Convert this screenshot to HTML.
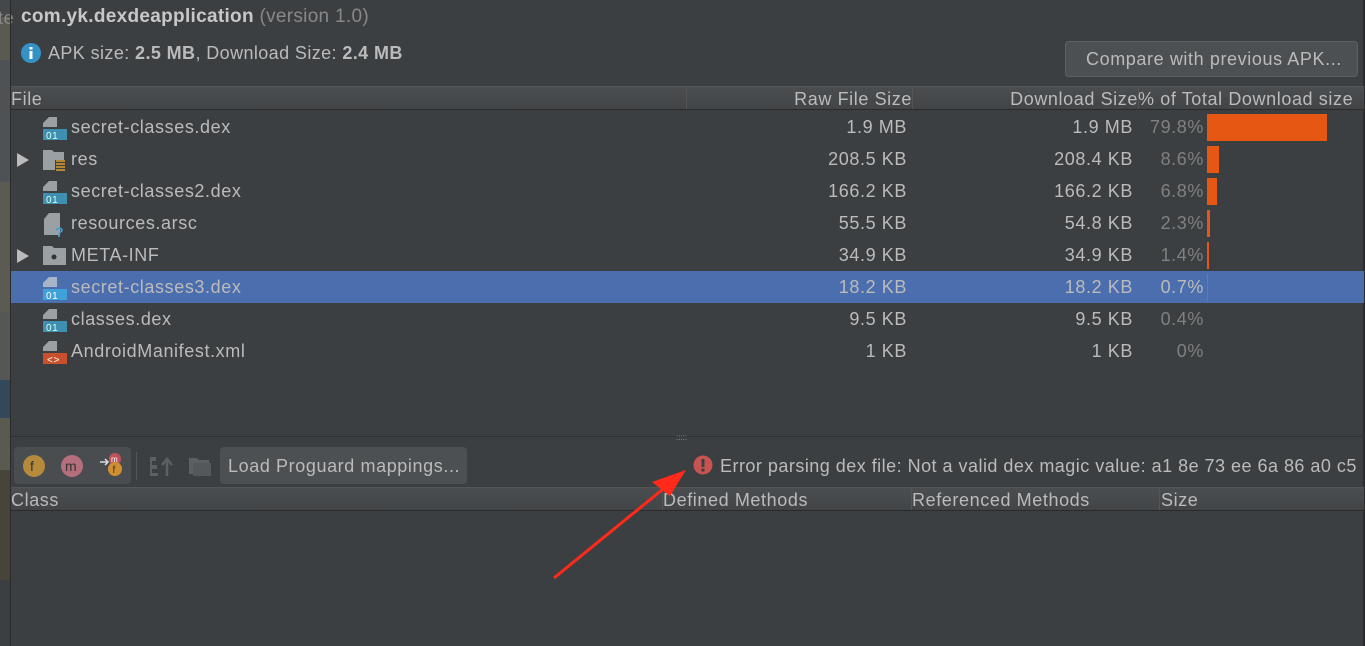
<!DOCTYPE html>
<html><head><meta charset="utf-8"><style>
*{margin:0;padding:0;box-sizing:border-box}
body{width:1365px;height:646px;background:#3c3f41;font-family:"Liberation Sans","Noto Sans CJK SC",sans-serif;color:#bbbbbb;position:relative;overflow:hidden;font-size:18px;letter-spacing:0.6px}
.a{position:absolute;white-space:nowrap}
.strip div{position:absolute;left:0;width:10px}
.hdr{position:absolute;left:11px;width:1353px;height:24px;background:linear-gradient(#4b4e50,#424547);border-top:1px solid #555;border-bottom:1px solid #2b2b2b}
.hdr span{position:absolute;top:2px;font-size:18px;color:#bbb;white-space:nowrap}
.row{position:absolute;left:11px;width:1353px;height:32px}
.row span{position:absolute;top:6px;font-size:18px}
.r{text-align:right}
.pct{color:#808080}
.bar{position:absolute;background:#e55712;left:1196px}
.ic{position:absolute;left:31px;top:4px}
.tri{position:absolute;left:6px;top:10px;width:0;height:0;border-left:12px solid #bbb;border-top:7px solid transparent;border-bottom:7px solid transparent}
.btn{position:absolute;background:#4c5052;border-radius:4px}
</style></head><body>
<div class="strip">
<div style="top:0;height:17px;background:#45484a"></div>
<div style="top:17px;height:43px;background:#5b5a51"></div>
<div style="top:60px;height:122px;background:#4f5254"></div>
<div style="top:182px;height:130px;background:#5c5b53"></div>
<div style="top:312px;height:68px;background:#545755"></div>
<div style="top:380px;height:38px;background:#33495a"></div>
<div style="top:418px;height:52px;background:#5b5a51"></div>
<div style="top:470px;height:110px;background:#47453a"></div>
</div>
<div class="a" style="left:-2px;top:8px;color:#888;font-size:18px">te</div>
<div class="a" style="left:10px;top:0;width:1px;height:646px;background:#2b2b2b"></div>
<div class="a" style="left:1363px;top:0;width:2px;height:646px;background:#2b2b2b"></div>

<div class="a" style="left:21px;top:6px;font-size:19px;letter-spacing:0.3px"><b style="color:#c8c8c8">com.yk.dexdeapplication</b> <span style="color:#888">(version 1.0)</span></div>
<svg class="a" style="left:20px;top:42px" width="22" height="22"><circle cx="11" cy="11" r="10" fill="#3592c4"/><rect x="9.5" y="9" width="3" height="8" fill="#fff"/><rect x="9.5" y="5" width="3" height="2.5" fill="#fff"/></svg>
<div class="a" style="left:48px;top:43px;font-size:18px;letter-spacing:0.4px">APK size: <b>2.5 MB</b>, Download Size: <b>2.4 MB</b></div>
<div class="btn" style="left:1065px;top:41px;width:293px;height:36px;border:1px solid #5e6163"></div>
<div class="a" style="left:1086px;top:49px;font-size:18px">Compare with previous APK...</div>

<div class="hdr" style="top:86px">
<span style="left:0">File</span>
<span style="left:675px;top:0;width:1px;height:22px;background:#555"></span>
<span class="r" style="left:700px;width:201px">Raw File Size</span>
<span style="left:901px;top:0;width:1px;height:22px;background:#555"></span>
<span class="r" style="left:920px;width:207px">Download Size</span>
<span style="left:1127px;top:0;width:1px;height:22px;background:#555"></span>
<span style="left:1127px">% of Total Download size</span>
</div>

<div class="row" style="top:111px">
<svg class="ic" width="26" height="26"><path d="M7 2h8v10H1V8z" fill="#9aa0a4"/><rect x="1" y="14" width="24" height="11" fill="#3e8fb0"/><text x="4" y="24" font-size="10" fill="#dfe" font-family="Liberation Sans">01</text></svg>
<span style="left:60px">secret-classes.dex</span><span class="r" style="left:700px;width:196px">1.9 MB</span><span class="r" style="left:930px;width:192px">1.9 MB</span><span class="r pct" style="left:1120px;width:73px">79.8%</span>
<div class="bar" style="top:3px;width:120px;height:27px"></div></div>
<div class="row" style="top:143px"><div class="tri"></div>
<svg class="ic" width="26" height="26"><path d="M1 3h9l2 2h10v18H1z" fill="#9aa0a4"/><rect x="13" y="13" width="11" height="11" fill="#3c3f41"/><path d="M14 14h9M14 17h9M14 20h9M14 23h9" stroke="#e0a030" stroke-width="1.5"/></svg>
<span style="left:60px">res</span><span class="r" style="left:700px;width:196px">208.5 KB</span><span class="r" style="left:930px;width:192px">208.4 KB</span><span class="r pct" style="left:1120px;width:73px">8.6%</span>
<div class="bar" style="top:3px;width:12px;height:27px"></div></div>
<div class="row" style="top:175px">
<svg class="ic" width="26" height="26"><path d="M7 2h8v10H1V8z" fill="#9aa0a4"/><rect x="1" y="14" width="24" height="11" fill="#3e8fb0"/><text x="4" y="24" font-size="10" fill="#dfe" font-family="Liberation Sans">01</text></svg>
<span style="left:60px">secret-classes2.dex</span><span class="r" style="left:700px;width:196px">166.2 KB</span><span class="r" style="left:930px;width:192px">166.2 KB</span><span class="r pct" style="left:1120px;width:73px">6.8%</span>
<div class="bar" style="top:3px;width:10px;height:27px"></div></div>
<div class="row" style="top:207px">
<svg class="ic" width="26" height="26"><path d="M7 2h11v22H2V8z" fill="#9aa0a4"/><text x="13" y="26" font-size="14" font-weight="bold" fill="#3ea0d0" font-family="Liberation Sans">?</text></svg>
<span style="left:60px">resources.arsc</span><span class="r" style="left:700px;width:196px">55.5 KB</span><span class="r" style="left:930px;width:192px">54.8 KB</span><span class="r pct" style="left:1120px;width:73px">2.3%</span>
<div class="bar" style="top:3px;width:3px;height:27px"></div></div>
<div class="row" style="top:239px"><div class="tri"></div>
<svg class="ic" width="26" height="26"><path d="M1 3h9l2 2h12v17H1z" fill="#9aa0a4"/><circle cx="12" cy="14" r="2.5" fill="#333"/></svg>
<span style="left:60px">META-INF</span><span class="r" style="left:700px;width:196px">34.9 KB</span><span class="r" style="left:930px;width:192px">34.9 KB</span><span class="r pct" style="left:1120px;width:73px">1.4%</span>
<div class="bar" style="top:3px;width:2px;height:27px"></div></div>
<div class="row" style="top:271px;background:#4b6eaf">
<svg class="ic" width="26" height="26"><path d="M7 2h8v10H1V8z" fill="#a8b4c8"/><rect x="1" y="14" width="24" height="11" fill="#40a0d8"/><text x="4" y="24" font-size="10" fill="#fff" font-family="Liberation Sans">01</text></svg>
<span style="left:60px">secret-classes3.dex</span><span class="r" style="left:700px;width:196px">18.2 KB</span><span class="r" style="left:930px;width:192px">18.2 KB</span><span class="r" style="left:1120px;width:73px">0.7%</span>
<div class="bar" style="top:3px;width:1px;height:27px"></div></div>
<div class="row" style="top:303px">
<svg class="ic" width="26" height="26"><path d="M7 2h8v10H1V8z" fill="#9aa0a4"/><rect x="1" y="14" width="24" height="11" fill="#3e8fb0"/><text x="4" y="24" font-size="10" fill="#dfe" font-family="Liberation Sans">01</text></svg>
<span style="left:60px">classes.dex</span><span class="r" style="left:700px;width:196px">9.5 KB</span><span class="r" style="left:930px;width:192px">9.5 KB</span><span class="r pct" style="left:1120px;width:73px">0.4%</span></div>
<div class="row" style="top:335px">
<svg class="ic" width="26" height="26"><path d="M7 2h8v10H1V8z" fill="#9aa0a4"/><rect x="1" y="14" width="24" height="11" fill="#c9502a"/><text x="5" y="24" font-size="10" fill="#fff" font-family="Liberation Sans">&lt;&gt;</text></svg>
<span style="left:60px">AndroidManifest.xml</span><span class="r" style="left:700px;width:196px">1 KB</span><span class="r" style="left:930px;width:192px">1 KB</span><span class="r pct" style="left:1120px;width:73px">0%</span></div>

<div class="a" style="left:11px;top:436px;width:1353px;height:1px;background:#2f3133"></div>
<div class="a" style="left:676px;top:433px;font-size:8px;color:#999;letter-spacing:0">:::::</div>

<div class="btn" style="left:14px;top:447px;width:117px;height:37px;background:#4a4d50"></div>
<svg class="a" style="left:22px;top:454px" width="24" height="24"><circle cx="12" cy="12" r="11" fill="#b58a3a"/><text x="8" y="17" font-size="14" fill="#333" font-family="Liberation Sans">f</text></svg>
<svg class="a" style="left:60px;top:454px" width="24" height="24"><circle cx="12" cy="12" r="11" fill="#b56e7c"/><text x="5" y="17" font-size="14" fill="#333" font-family="Liberation Sans">m</text></svg>
<svg class="a" style="left:98px;top:451px" width="26" height="28"><circle cx="17" cy="8" r="6" fill="#c0505a"/><text x="13" y="11" font-size="8" fill="#fff" font-family="Liberation Sans">m</text><circle cx="17" cy="18" r="7" fill="#d09030"/><text x="14.5" y="22" font-size="10" fill="#333" font-family="Liberation Sans">f</text><path d="M2 11h8M7 8l3 3-3 3" stroke="#ddd" stroke-width="1.5" fill="none"/></svg>
<div class="a" style="left:136px;top:452px;width:1px;height:28px;background:#555"></div>
<svg class="a" style="left:148px;top:455px" width="26" height="22"><path d="M2 2h6v4h-4v4h5v4h-5v4h6v3H2z" fill="#5d6062"/><path d="M19 21V6M14 10l5-6 5 6" stroke="#5d6062" stroke-width="2.5" fill="none"/></svg>
<svg class="a" style="left:188px;top:455px" width="24" height="22"><path d="M1 3h8l2 2h10v14H1z" fill="#5d6062"/><rect x="5" y="8" width="18" height="13" fill="#55585a"/></svg>
<div class="btn" style="left:220px;top:447px;width:247px;height:37px"></div>
<div class="a" style="left:228px;top:456px;font-size:18px">Load Proguard mappings...</div>
<svg class="a" style="left:693px;top:455px" width="20" height="20"><circle cx="10" cy="10" r="9.5" fill="#c75450"/><rect x="8.5" y="4" width="3" height="8" fill="#3c3f41"/><rect x="8.5" y="13.5" width="3" height="3" fill="#3c3f41"/></svg>
<div class="a" style="left:720px;top:456px;font-size:18px;letter-spacing:0.48px">Error parsing dex file: Not a valid dex magic value: a1 8e 73 ee 6a 86 a0 c5</div>

<div class="hdr" style="top:487px">
<span style="left:0">Class</span>
<span style="left:651px;top:0;width:1px;height:22px;background:#555"></span>
<span style="left:652px">Defined Methods</span>
<span style="left:900px;top:0;width:1px;height:22px;background:#555"></span>
<span style="left:901px">Referenced Methods</span>
<span style="left:1148px;top:0;width:1px;height:22px;background:#555"></span>
<span style="left:1150px">Size</span>
</div>

<svg class="a" style="left:0;top:0" width="1365" height="646"><path d="M554 578L668 485" stroke="#ff2a1a" stroke-width="3"/><path d="M686 470L652 482L670 496z" fill="#ff2a1a"/></svg>
</body></html>
